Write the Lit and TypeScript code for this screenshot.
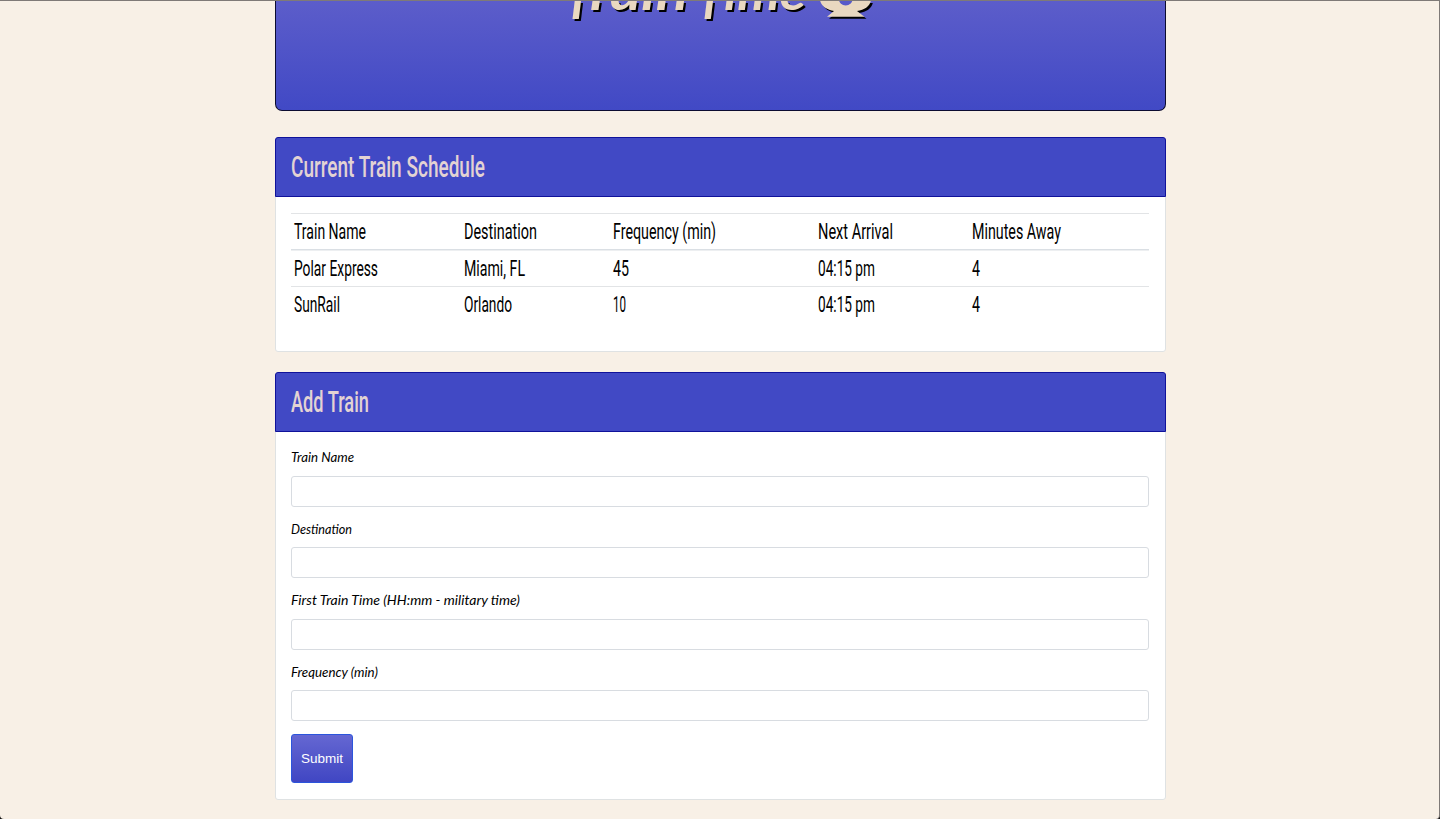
import { LitElement, html, css, svg } from "lit";
import { customElement, property } from "lit/decorators.js";

/** A line of text set to an exact measure. */
@customElement("fit-text")
class FitText extends LitElement {
  @property() text = "";
  @property({ type: Number }) width = 0;
  @property({ type: Number }) height = 20;
  @property({ type: Number }) baseline = 16;

  static styles = css`
    :host { display: block; }
    svg { display: block; overflow: visible; }
    text { fill: currentColor; }
  `;

  render() {
    return html`<svg width=${this.width} height=${this.height} aria-label=${this.text}>
      <text x="0" y=${this.baseline} textLength=${this.width} lengthAdjust="spacingAndGlyphs">${this.text}</text>
    </svg>`;
  }
}

type Cell = [string, number];

@customElement("app-root")
class AppRoot extends LitElement {
  columns: Cell[] = [
    ["Train Name", 72], ["Destination", 73], ["Frequency (min)", 103], ["Next Arrival", 75], ["Minutes Away", 89],
  ];

  trains: Cell[][] = [
    [["Polar Express", 84], ["Miami, FL", 61], ["45", 16], ["04:15 pm", 57], ["4", 8]],
    [["SunRail", 46], ["Orlando", 48], ["10", 13], ["04:15 pm", 57], ["4", 8]],
  ];

  fields: Cell[] = [
    ["Train Name", 63], ["Destination", 61], ["First Train Time (HH:mm - military time)", 229], ["Frequency (min)", 87],
  ];

  static styles = css`
    :host {
      display: block;
      height: 819px;
      overflow: hidden;
      background: #111;
      color: #000;
      font-family: Roboto, sans-serif;
    }
    * { box-sizing: border-box; }
    .window {
      height: 819px;
      overflow: hidden;
      background: #f8f0e6;
      border-top: 1px solid #7f7a77;
      border-right: 1px solid #7f7a77;
      border-radius: 0 0 4px 4px;
    }
    .page { width: 891px; margin: 0 0 0 274.5px; }
    .hero {
      height: 109.5px;
      border: solid #0c0c30;
      border-width: 0 1.5px 1.5px;
      border-radius: 0 0 7px 7px;
      background: linear-gradient(#5c5dca, #4149c5);
      overflow: hidden;
    }
    .hero svg {
      display: block;
      margin-left: 294.5px;
      fill: #e9d8c0;
      filter: drop-shadow(2px 2px 0 #000);
      font: italic 700 48px Lato, sans-serif;
    }
    .hole { fill: #585ac9; }
    .card {
      background: #fff;
      border: 1px solid #dfe2e3;
      border-radius: 3px;
      margin-top: 26.5px;
      height: 215px;
    }
    .card + .card { margin-top: 20px; height: 428px; }
    .head {
      height: 60px;
      margin: -1px -1px 0;
      padding: 14px 15.5px;
      background: #4149c5;
      border: 1px solid #10129a;
      border-radius: 3px 3px 0 0;
      color: #e3d3d3;
      font-size: 29.5px;
      font-weight: 500;
    }
    .body { padding: 16px 15.5px; }
    .row {
      display: grid;
      grid-template-columns: 170px 149px 205px 153.5px 1fr;
      height: 36.5px;
      padding: 6px 0 0 3px;
      border-top: 1px solid #e2e4e6;
      font-size: 22.5px;
      font-weight: 400;
    }
    .row + .row { height: 37px; }
    .titles { height: 37px; border-bottom: 1px solid #dadfe4; }
    .titles + .row { border-top-color: #edeff1; height: 36px; padding-top: 5.5px; }
    .form { padding-top: 15px; }
    .field { height: 71.6px; }
    .field:nth-last-child(2) { height: 72.4px; }
    .label { font: italic 400 14px Lato, sans-serif; }
    input {
      display: block;
      width: 858px;
      height: 31px;
      margin: 8.5px 0 0;
      border: 1px solid #d8dce1;
      border-radius: 3px;
      background: #fff;
      outline: none;
    }
    button {
      display: block;
      width: 62px;
      height: 49px;
      margin: 0;
      padding: 0;
      border: 1px solid #2c55dc;
      border-radius: 3px;
      background: linear-gradient(#6567d2, #4046c3);
      color: #fff;
      font: 13.5px "Liberation Sans", Arial, sans-serif;
    }
  `;

  cell([text, width]: Cell) {
    return html`<fit-text .text=${text} .width=${width} .height=${22} .baseline=${18.5}></fit-text>`;
  }

  titlePart(text: string, x: number, y: number, width: number) {
    return svg`<text x=${x} y=${y} textLength=${width} lengthAdjust="spacingAndGlyphs">${text}</text>`;
  }

  render() {
    return html`
      <div class="window">
        <main class="page">
          <header class="hero">
            <svg width="320" height="30" viewBox="570 1 320 30">
              ${this.titlePart("T", 564, 19, 27)}
              ${this.titlePart("rain", 590, 10, 98)}
              ${this.titlePart("T", 696, 19, 27)}
              ${this.titlePart("ime", 724, 10, 82)}
              <path d="M820-8V0C821 6 827 10 834 11L827 16.8H864.5L857 11C865 10 870 6 871 0V-8Z" />
              <circle class="hole" cx="845.7" cy="-1.5" r="7" />
            </svg>
          </header>
          <section class="card">
            <div class="head">
              <fit-text .text=${"Current Train Schedule"} .width=${194} .height=${30} .baseline=${25}></fit-text>
            </div>
            <div class="body">
              <div class="row titles">${this.columns.map((c) => this.cell(c))}</div>
              ${this.trains.map((t) => html`<div class="row">${t.map((c) => this.cell(c))}</div>`)}
            </div>
          </section>
          <section class="card">
            <div class="head">
              <fit-text .text=${"Add Train"} .width=${78} .height=${30} .baseline=${25}></fit-text>
            </div>
            <div class="body form">
              ${this.fields.map(
                ([text, width]) => html`<div class="field">
                  <fit-text class="label" .text=${text} .width=${width} .height=${20} .baseline=${15}></fit-text>
                  <input aria-label=${text} />
                </div>`
              )}
              <button>Submit</button>
            </div>
          </section>
        </main>
      </div>
    `;
  }
}
